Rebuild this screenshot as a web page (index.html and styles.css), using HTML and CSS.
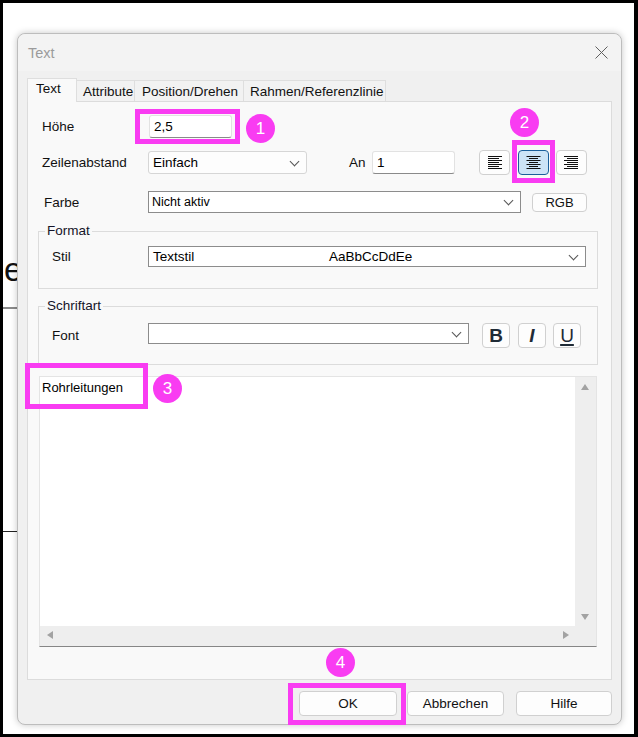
FILE: index.html
```html
<!DOCTYPE html>
<html lang="de">
<head>
  <meta charset="UTF-8" />
  <title>Text</title>
  <link rel="stylesheet" href="styles.css">
</head>
<body>
  <div class="screen">
    <!-- CAD-Zeichnung hinter dem Dialog -->
    <span class="cad-glyph">e</span>
    <div class="cad-line gray"></div>
    <div class="cad-line black"></div>

    <div class="dialog">
      <div class="titlebar">
        <span class="title">Text</span>
        <svg class="close" width="13" height="13" viewBox="0 0 13 13">
          <path d="M0.5 0.5 L12.5 12.5 M12.5 0.5 L0.5 12.5" stroke="#5f5f5f" stroke-width="1" fill="none"/>
        </svg>
      </div>

      <div class="tabs">
        <div class="tab active">Text</div>
        <div class="tab w-attr">Attribute</div>
        <div class="tab w-pos">Position/Drehen</div>
        <div class="tab w-rahmen">Rahmen/Referenzlinie</div>
      </div>

      <div class="panel">
        <div class="row row-hoehe">
          <label class="lbl">Höhe</label>
          <div class="edit hoehe">2,5</div>
        </div>

        <div class="row row-zeilen">
          <label class="lbl">Zeilenabstand</label>
          <div class="combo soft zeilen">Einfach<span class="chev"></span></div>
          <label class="an">An</label>
          <div class="edit an-edit">1</div>
          <div class="align-group">
            <button class="align-btn">
              <svg width="15" height="13" viewBox="0 0 15 13">
                <g stroke="#111" stroke-width="1">
                  <path d="M1 0.5h14M1 2.5h11M1 4.5h14M1 6.5h11M1 8.5h14M1 10.5h11M1 12.5h14"/>
                </g>
              </svg>
            </button>
            <button class="align-btn selected">
              <svg width="15" height="13" viewBox="0 0 15 13">
                <g stroke="#111" stroke-width="1">
                  <path d="M0.5 0.5h14M3 2.5h9M0.5 4.5h14M3 6.5h9M0.5 8.5h14M3 10.5h9M0.5 12.5h14"/>
                </g>
              </svg>
            </button>
            <button class="align-btn">
              <svg width="15" height="13" viewBox="0 0 15 13">
                <g stroke="#111" stroke-width="1">
                  <path d="M0 0.5h14M3 2.5h11M0 4.5h14M3 6.5h11M0 8.5h14M3 10.5h11M0 12.5h14"/>
                </g>
              </svg>
            </button>
          </div>
        </div>

        <div class="row row-farbe">
          <label class="lbl farbe-lbl">Farbe</label>
          <div class="combo farbe">Nicht aktiv<span class="chev"></span></div>
          <button class="btn rgb">RGB</button>
        </div>

        <fieldset class="group format">
          <legend>Format</legend>
          <div class="grow">
            <label class="glbl">Stil</label>
            <div class="combo stil">
              <span class="stil-name">Textstil</span>
              <span class="stil-sample">AaBbCcDdEe</span>
              <span class="chev"></span>
            </div>
          </div>
        </fieldset>

        <fieldset class="group schrift">
          <legend>Schriftart</legend>
          <div class="grow top">
            <label class="glbl font-lbl">Font</label>
            <div class="combo font"><span class="chev"></span></div>
            <button class="style-btn b-btn">B</button>
            <button class="style-btn i-btn">I</button>
            <button class="style-btn u-btn">U</button>
          </div>
        </fieldset>

        <div class="textbox">
          <div class="text-area">Rohrleitungen</div>
          <div class="vscroll">
            <span class="arr up"></span>
            <span class="arr down"></span>
          </div>
          <div class="hscroll">
            <span class="arr left"></span>
            <span class="arr right"></span>
          </div>
        </div>
      </div>

      <div class="buttons">
        <button class="btn dlg ok">OK</button>
        <button class="btn dlg abbr">Abbrechen</button>
        <button class="btn dlg hilfe">Hilfe</button>
      </div>
    </div>

    <!-- Markierungen -->
    <div class="mark m1"></div>
    <div class="mark m2"></div>
    <div class="mark m3"></div>
    <div class="mark m4"></div>
    <div class="num n1">1</div>
    <div class="num n2">2</div>
    <div class="num n3">3</div>
    <div class="num n4">4</div>
  </div>
</body>
</html>
```

FILE: styles.css
```css
body {
  margin: 0;
  background: #000;
  font-family: 'Liberation Sans', Arial, sans-serif;
  font-size: 13.5px;
  color: #111;
}

.screen {
  position: relative;
  width: 631px;
  height: 731px;
  margin: 3px 4px 3px 3px;
  padding: 30px 0 0 14px;
  box-sizing: border-box;
  background: #fff;
  overflow: hidden;
}

.cad-glyph {
  position: absolute;
  left: 1px;
  top: 249px;
  font-size: 33px;
  line-height: 36px;
  color: #111;
}

.cad-line {
  position: absolute;
  left: 0;
  width: 16px;
}

.cad-line.gray {
  top: 304px;
  height: 2px;
  background: #8a8a8a;
}

.cad-line.black {
  top: 528px;
  height: 1px;
  background: #222;
}

.dialog {
  position: relative;
  width: 605px;
  height: 692px;
  box-sizing: border-box;
  border: 1px solid #bdbdbd;
  border-radius: 8px;
  background: #f0f0f0;
  box-shadow: 0 0 7px rgba(0,0,0,0.22);
}

.titlebar {
  height: 37px;
  display: flex;
  align-items: center;
  justify-content: space-between;
  padding: 0 13px 0 10px;
  background: #f3f3f3;
  border-radius: 8px 8px 0 0;
}

.title {
  color: #9b9b9b;
  font-size: 14.5px;
}

.tabs {
  display: flex;
  align-items: flex-end;
  height: 23px;
  margin-top: 7px;
  padding-left: 9px;
  position: relative;
  z-index: 1;
}

.tab {
  height: 21px;
  line-height: 21px;
  box-sizing: border-box;
  padding-left: 6px;
  border: 1px solid #dedede;
  border-bottom: none;
  border-left: none;
  background: #f2f2f2;
  white-space: nowrap;
}

.tab.active {
  width: 50px;
  height: 24px;
  line-height: 20px;
  padding-left: 8px;
  border-left: 1px solid #dedede;
  background: #f9f9f9;
  margin-bottom: -1px;
}

.w-attr { width: 58px; }
.w-pos { width: 109px; padding-left: 7px; }
.w-rahmen { width: 142px; }

.panel {
  height: 579px;
  margin: 0 9px;
  box-sizing: border-box;
  border: 1px solid #dcdcdc;
  background: #f9f9f9;
  padding: 13px 13px 0 10px;
}

.row {
  display: flex;
  align-items: center;
  padding-left: 4px;
}

.lbl {
  width: 106px;
  flex: none;
}

.farbe-lbl {
  padding-left: 2px;
  width: 104px;
}

.row-hoehe { height: 23px; }
.row-zeilen { height: 25px; margin-top: 12px; }
.row-farbe { height: 22px; margin-top: 16px; }

.edit {
  height: 23px;
  box-sizing: border-box;
  background: #fff;
  border: 1px solid #e2e2e2;
  border-bottom: 1px solid #8a8a8a;
  border-radius: 3px;
  padding: 2px 4px 0;
  line-height: 18px;
  color: #000;
}

.hoehe {
  width: 83px;
  margin-left: 1px;
}

.combo {
  position: relative;
  box-sizing: border-box;
  background: #fff;
  border: 1px solid #8c8c8c;
  padding: 0 3px;
  color: #000;
}

.combo.soft {
  border-color: #d6d6d6;
  border-radius: 3px;
  background: #fdfdfd;
}

.chev {
  position: absolute;
  right: 8px;
  top: 50%;
  width: 6px;
  height: 6px;
  margin-top: -5px;
  border-right: 1px solid #555;
  border-bottom: 1px solid #555;
  transform: rotate(45deg);
}

.zeilen {
  width: 159px;
  height: 23px;
  line-height: 21px;
  padding-left: 4px;
}

.an {
  margin-left: 42px;
  width: 23px;
}

.an-edit {
  width: 83px;
  padding-left: 4px;
}

.align-group {
  display: flex;
  margin-left: 24px;
}

.align-btn {
  width: 31px;
  height: 25px;
  padding: 0;
  display: flex;
  align-items: center;
  justify-content: center;
  background: #fdfdfd;
  border: 1px solid #d0d0d0;
  border-radius: 4px;
}

.align-btn + .align-btn { margin-left: 8px; }
.align-btn.selected + .align-btn { margin-left: 7px; }

.align-btn.selected {
  background: #cce4f7;
  border-color: #1a5f9b;
}

.farbe {
  width: 373px;
  height: 22px;
  line-height: 20px;
  font-size: 12.5px;
}

.btn {
  font-family: inherit;
  font-size: 13.5px;
  color: #111;
  background: #fdfdfd;
  border: 1px solid #d0d0d0;
  border-radius: 4px;
  padding: 0;
}

.rgb {
  width: 55px;
  height: 19px;
  margin-left: 11px;
  font-size: 13px;
}

.group {
  margin: 10px 0 0;
  border: 1px solid #dcdcdc;
  padding: 7px 11px 21px 13px;
  min-width: 0;
}

.group legend {
  padding: 0 2px;
  margin-left: -7px;
  line-height: 16px;
  color: #141428;
}

.group.schrift {
  margin-top: 9px;
  padding: 9px 11px 16px 13px;
}

.grow {
  display: flex;
  align-items: center;
}

.grow.top { align-items: flex-start; }

.glbl {
  width: 96px;
  flex: none;
}

.font-lbl { line-height: 25px; }

.stil {
  flex: 1;
  height: 21px;
  line-height: 19px;
  display: flex;
}

.stil-name { width: 176px; padding-left: 1px; }

.font {
  width: 321px;
  height: 21px;
}

.style-btn {
  width: 28px;
  height: 25px;
  padding: 0;
  background: #fdfdfd;
  border: 1px solid #d0d0d0;
  border-radius: 4px;
  font-family: 'Liberation Sans', Arial, sans-serif;
  font-size: 19px;
  font-weight: bold;
  color: #1f2b36;
  line-height: 23px;
}

.b-btn { margin-left: 13px; font-weight: 900; }
.i-btn { margin-left: 8px; font-style: italic; }
.u-btn {
  margin-left: 7px;
  font-weight: normal;
  text-decoration: underline;
  text-decoration-thickness: 2px;
  text-underline-offset: 2px;
  line-height: 20px;
}

.textbox {
  margin: 11px 0 0 1px;
  width: 558px;
  height: 271px;
  box-sizing: border-box;
  border: 1px solid #e4e4e4;
  border-bottom: 1px solid #868686;
  display: grid;
  grid-template-columns: 1fr 21px;
  grid-template-rows: 1fr 20px;
  background: #fff;
}

.text-area {
  padding: 3px 2px;
  line-height: 16px;
  font-size: 13px;
  color: #000;
}

.vscroll {
  position: relative;
  background: #eeeeee;
}

.hscroll {
  position: relative;
  grid-column: 1 / 3;
  background: #eeeeee;
}

.arr {
  position: absolute;
  width: 0;
  height: 0;
}

.arr.up {
  left: 6px;
  top: 7px;
  border-left: 4px solid transparent;
  border-right: 4px solid transparent;
  border-bottom: 6px solid #a2a2a2;
}

.arr.down {
  left: 6px;
  bottom: 6px;
  border-left: 4px solid transparent;
  border-right: 4px solid transparent;
  border-top: 6px solid #a2a2a2;
}

.arr.left {
  left: 7px;
  top: 5px;
  border-top: 4px solid transparent;
  border-bottom: 4px solid transparent;
  border-right: 6px solid #a2a2a2;
}

.arr.right {
  left: 523px;
  top: 5px;
  border-top: 4px solid transparent;
  border-bottom: 4px solid transparent;
  border-left: 6px solid #a2a2a2;
}

.buttons {
  display: flex;
  justify-content: flex-end;
  margin: 11px 9px 0 0;
}

.dlg {
  height: 25px;
}

.ok { width: 98px; }
.abbr { width: 97px; margin-left: 10px; }
.hilfe { width: 96px; margin-left: 12px; }

.mark {
  position: absolute;
  box-sizing: border-box;
  border: 5px solid #f93cf2;
}

.m1 { left: 132px; top: 106px; width: 105px; height: 35px; }
.m2 { left: 509px; top: 137px; width: 43px; height: 43px; }
.m3 { left: 22px; top: 360px; width: 123px; height: 46px; }
.m4 { left: 285px; top: 680px; width: 118px; height: 42px; }

.num {
  position: absolute;
  width: 29px;
  height: 29px;
  border-radius: 50%;
  background: #f93cf2;
  color: #fff;
  font-family: 'Liberation Sans', Arial, sans-serif;
  font-size: 17px;
  line-height: 29px;
  text-align: center;
}

.n1 { left: 243px; top: 111px; }
.n2 { left: 507px; top: 105px; }
.n3 { left: 150px; top: 371px; }
.n4 { left: 323px; top: 645px; }
```
